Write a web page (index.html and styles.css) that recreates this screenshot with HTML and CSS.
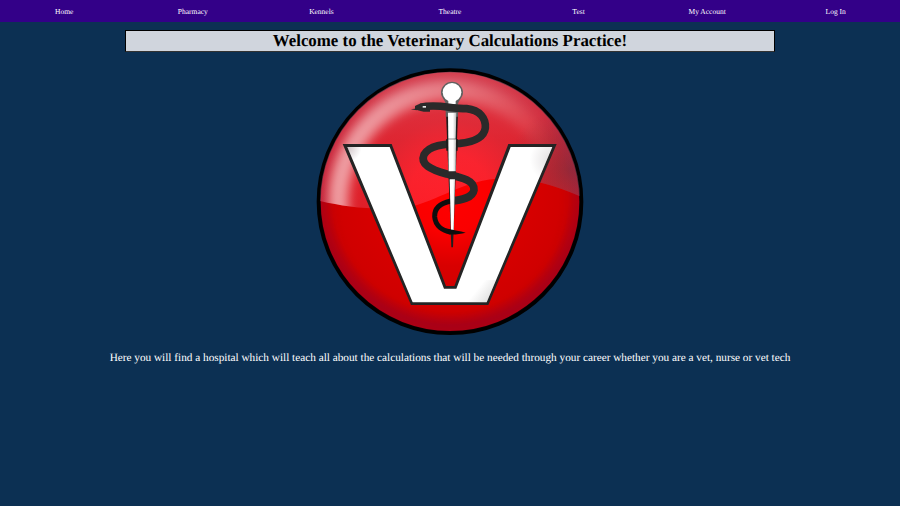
FILE: index.html
```html
<!DOCTYPE html>
<html lang="en">
<head>
<meta charset="utf-8">
<title>Veterinary Calculations Practice</title>
<link rel="stylesheet" href="styles.css">
</head>
<body>
<nav class="nav">
  <a href="#">Home</a>
  <a href="#">Pharmacy</a>
  <a href="#">Kennels</a>
  <a href="#">Theatre</a>
  <a href="#">Test</a>
  <a href="#">My Account</a>
  <a href="#">Log In</a>
</nav>
<main class="main">
  <h1 class="title">Welcome to the Veterinary Calculations Practice!</h1>
  <svg class="logo" viewBox="0 0 900 855" width="300" height="285" role="img" aria-label="Veterinary caduceus logo">
    <defs>
      <radialGradient id="ball" gradientUnits="userSpaceOnUse" cx="450" cy="400" r="395">
        <stop offset="0" stop-color="#ff0000"/>
        <stop offset="0.3" stop-color="#fa0000"/>
        <stop offset="0.55" stop-color="#d80000"/>
        <stop offset="0.9" stop-color="#cf0000"/>
        <stop offset="1" stop-color="#b00014"/>
      </radialGradient>
      <linearGradient id="gloss" gradientUnits="userSpaceOnUse" x1="450" y1="30" x2="450" y2="440">
        <stop offset="0" stop-color="#e890b0" stop-opacity="0.42"/>
        <stop offset="0.5" stop-color="#f080a8" stop-opacity="0.3"/>
        <stop offset="1" stop-color="#ff80a8" stop-opacity="0.24"/>
      </linearGradient>
      <linearGradient id="arc" gradientUnits="userSpaceOnUse" x1="110" y1="170" x2="760" y2="300">
        <stop offset="0" stop-color="#ffffff" stop-opacity="0.6"/>
        <stop offset="0.55" stop-color="#ffffff" stop-opacity="0.3"/>
        <stop offset="1" stop-color="#ffffff" stop-opacity="0"/>
      </linearGradient>
      <radialGradient id="edge" gradientUnits="userSpaceOnUse" cx="810" cy="330" r="190">
        <stop offset="0" stop-color="#403040" stop-opacity="0.4"/>
        <stop offset="1" stop-color="#403040" stop-opacity="0"/>
      </radialGradient>
      <linearGradient id="shaft" gradientUnits="userSpaceOnUse" x1="442" y1="0" x2="470" y2="0">
        <stop offset="0" stop-color="#ffffff"/>
        <stop offset="0.6" stop-color="#ffffff"/>
        <stop offset="1" stop-color="#b4b4b4"/>
      </linearGradient>
      <radialGradient id="cornerL" gradientUnits="userSpaceOnUse" cx="140" cy="262" r="45">
        <stop offset="0" stop-color="#806068" stop-opacity="0.4"/>
        <stop offset="1" stop-color="#806068" stop-opacity="0"/>
      </radialGradient>
      <radialGradient id="cornerR" gradientUnits="userSpaceOnUse" cx="760" cy="300" r="70">
        <stop offset="0" stop-color="#605058" stop-opacity="0.2"/>
        <stop offset="1" stop-color="#605058" stop-opacity="0"/>
      </radialGradient>
      <linearGradient id="cornerB" gradientUnits="userSpaceOnUse" x1="530" y1="690" x2="580" y2="730">
        <stop offset="0" stop-color="#909090" stop-opacity="0"/>
        <stop offset="1" stop-color="#909090" stop-opacity="0.35"/>
      </linearGradient>
      <filter id="soft" x="-20%" y="-20%" width="140%" height="140%"><feGaussianBlur stdDeviation="16"/></filter>
      <clipPath id="disc"><circle cx="450" cy="425" r="390"/></clipPath>
      <clipPath id="upper"><path d="M40 20 H860 V418 C760 372 680 352 590 356 C470 366 400 436 300 444 C200 450 120 438 40 418 Z"/></clipPath>
      <clipPath id="vee"><path d="M142 261 L269 261 L432 686 L469 686 L632 261 L757 261 L560 727 L338 727 Z"/></clipPath>
    </defs>

    <circle cx="450" cy="425" r="394" fill="url(#ball)" stroke="#000" stroke-width="12"/>

    <g clip-path="url(#disc)">
      <circle cx="450" cy="425" r="372" fill="none" stroke="#8a0028" stroke-width="22" opacity="0.3" filter="url(#soft)"/>
      <g clip-path="url(#upper)">
        <rect x="40" y="20" width="820" height="440" fill="url(#gloss)"/>
        <circle cx="450" cy="425" r="335" fill="none" stroke="url(#arc)" stroke-width="60" filter="url(#soft)"/>
        <rect x="560" y="100" width="300" height="360" fill="url(#edge)"/>
      </g>
    </g>

    <!-- staff head and dark outline -->
    <path d="M438 158 L474 158 L459 562 L454 562 Z" fill="#1e1e1e"/>
    <path d="M423 98 A33 33 0 1 1 489 98 C489 112 476 120 474 132 L474 170 L437 170 L437 132 C436 120 423 112 423 98 Z" fill="#606060"/>
    <circle cx="456" cy="97" r="28" fill="#fff"/>
    <path d="M445 115 H467 V132 H445 Z" fill="#fff"/>

    <!-- snake -->
    <path d="M362 142 C410 130 450 146 500 146 C540 150 558 176 556 204 C552 232 520 246 480 250 C430 252 388 256 372 284 C360 312 390 328 440 342 C490 354 524 362 522 390 C518 414 486 420 450 424" fill="none" stroke="#2a2a2a" stroke-width="23"/>
    <path d="M452 423 C420 430 403 446 404 470 C406 498 428 512 452 516" fill="none" stroke="#0e0e0e" stroke-width="15"/>
    <path d="M332 148 L356 145 L350 151 Z" fill="#2a2a2a"/>
    <path d="M345 138 C354 132 370 127 390 131 L390 155 C372 157 358 153 345 147 Z" fill="#2a2a2a"/>
    <rect x="368" y="138" width="10" height="5" fill="#e8e8e8"/>

    <!-- staff segments in front of the snake -->
    <path d="M444 158 L469 158 L467 236 L445 236 Z" fill="url(#shaft)"/>
    <path d="M438 238 L474 238 L473 272 L439 272 Z" fill="#1e1e1e"/>
    <path d="M445 238 L468 238 L467 334 L446 334 Z" fill="url(#shaft)"/>
    <path d="M449 358 L465 358 L461 510 L453 510 Z" fill="url(#shaft)"/>

    <!-- snake tail crossing in front -->
    <path d="M446 508 C462 510 480 514 497 518 C480 522 462 525 446 523 Z" fill="#0e0e0e"/>

    <!-- V -->
    <path d="M128 252 L275 252 L438 678 L463 678 L625 252 L770 252 L565 735 L333 735 Z" fill="#242424"/>
    <path d="M142 261 L269 261 L432 686 L469 686 L632 261 L757 261 L560 727 L338 727 Z" fill="#fff"/>

    <!-- faint shading on the V corners -->
    <g clip-path="url(#vee)">
      <rect x="90" y="210" width="100" height="100" fill="url(#cornerL)"/>
      <rect x="680" y="230" width="150" height="150" fill="url(#cornerR)"/>
      <rect x="500" y="660" width="100" height="80" fill="url(#cornerB)"/>
    </g>
  </svg>
  <p class="intro">Here you will find a hospital which will teach all about the calculations that will be needed through your career whether you are a vet, nurse or vet tech</p>
</main>
</body>
</html>
```

FILE: styles.css
```css
html, body {
  margin: 0;
  padding: 0;
}
body {
  min-height: 506px;
  background: #0c3053;
  color: #fff;
  font-family: "Liberation Serif", "Times New Roman", serif;
  text-rendering: geometricPrecision;
}
.nav {
  display: grid;
  grid-template-columns: repeat(7, 1fr);
  height: 22px;
  align-items: center;
  background: #330088;
}
.nav a {
  color: #fff;
  font-size: 7.5px;
  text-align: center;
  text-decoration: none;
}
.main {
  display: flex;
  flex-direction: column;
  align-items: center;
  padding-top: 8px;
}
.title {
  box-sizing: border-box;
  width: 650px;
  height: 22px;
  margin: 0;
  border: 1px solid #000;
  border-bottom-color: #333;
  background: #d0d5dd;
  color: #000;
  font-size: 16.875px;
  line-height: 19px;
  text-align: center;
}
.logo {
  display: block;
  margin-top: 8px;
}
.intro {
  margin: 6px 0 0;
  font-size: 11.25px;
  line-height: 14px;
  text-align: center;
}
```
